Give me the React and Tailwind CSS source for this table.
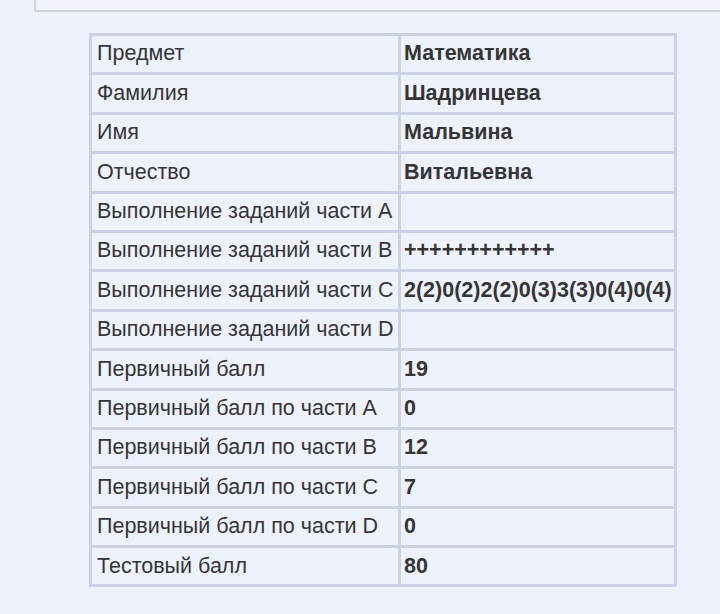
import React from "react";

const rows = [
  ["Предмет", "Математика"],
  ["Фамилия", "Шадринцева"],
  ["Имя", "Мальвина"],
  ["Отчество", "Витальевна"],
  ["Выполнение заданий части A", ""],
  ["Выполнение заданий части B", "++++++++++++"],
  ["Выполнение заданий части C", "2(2)0(2)2(2)0(3)3(3)0(4)0(4)"],
  ["Выполнение заданий части D", ""],
  ["Первичный балл", "19"],
  ["Первичный балл по части A", "0"],
  ["Первичный балл по части B", "12"],
  ["Первичный балл по части C", "7"],
  ["Первичный балл по части D", "0"],
  ["Тестовый балл", "80"],
];

const App = () => {
  return (
    <div
      className="min-h-screen bg-[#eef2fc] overflow-hidden"
      style={{ fontFamily: '"Liberation Sans", Arial, sans-serif' }}
    >
      {/* top panel (cut off) */}
      <div className="ml-[34px] h-[12px] border-l-2 border-b-2 border-[#cfd2df] bg-[#f1f4fc]" />

      <table className="ml-[89px] mt-[21px] w-[588px] table-fixed border-collapse border-[3px] border-[#c9cde4] text-[21.5px] leading-none text-[#353535]">
        <tbody>
          {rows.map(([label, value], i) => (
            <tr key={i} className="h-[39.4px]">
              <td className="w-[309px] border-[3px] border-[#cdd1e7] pl-[5px] pr-0 py-0 whitespace-nowrap">
                {label}
              </td>
              <td className="border-[3px] border-[#cdd1e7] pl-[3px] pr-0 py-0 font-bold whitespace-nowrap">
                {value}
              </td>
            </tr>
          ))}
        </tbody>
      </table>
    </div>
  );
};

export default App;
